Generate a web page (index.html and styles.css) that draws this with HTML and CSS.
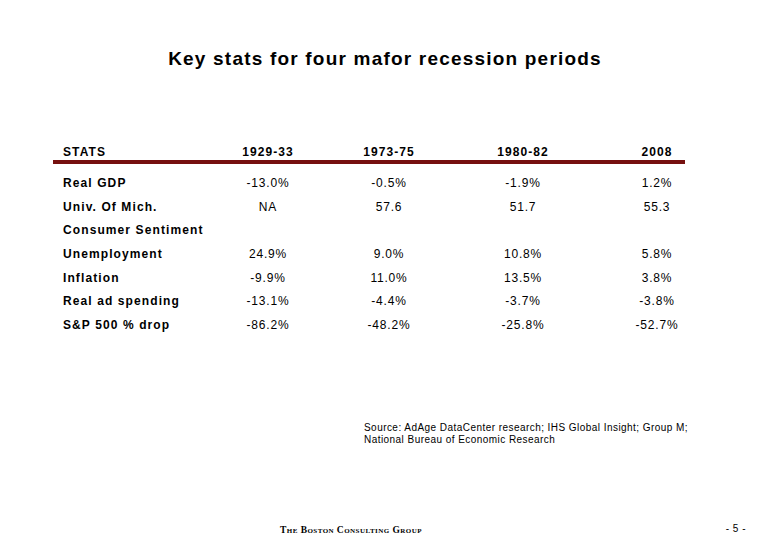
FILE: index.html
```html
<!DOCTYPE html>
<html>
<head>
<meta charset="utf-8">
<link rel="stylesheet" href="styles.css">
</head>
<body>
<div class="page">
  <h1 class="title">Key stats for four mafor recession periods</h1>
  <div class="table">
    <div class="row head">
      <div class="label">STATS</div>
      <div class="cell">1929-33</div>
      <div class="cell">1973-75</div>
      <div class="cell">1980-82</div>
      <div class="cell">2008</div>
    </div>
    <div class="rule"></div>
    <div class="body">
      <div class="row">
        <div class="label">Real GDP</div>
        <div class="cell">-13.0%</div>
        <div class="cell">-0.5%</div>
        <div class="cell">-1.9%</div>
        <div class="cell">1.2%</div>
      </div>
      <div class="row">
        <div class="label">Univ. Of Mich.<br>Consumer Sentiment</div>
        <div class="cell">NA</div>
        <div class="cell">57.6</div>
        <div class="cell">51.7</div>
        <div class="cell">55.3</div>
      </div>
      <div class="row">
        <div class="label">Unemployment</div>
        <div class="cell">24.9%</div>
        <div class="cell">9.0%</div>
        <div class="cell">10.8%</div>
        <div class="cell">5.8%</div>
      </div>
      <div class="row">
        <div class="label">Inflation</div>
        <div class="cell">-9.9%</div>
        <div class="cell">11.0%</div>
        <div class="cell">13.5%</div>
        <div class="cell">3.8%</div>
      </div>
      <div class="row">
        <div class="label">Real ad spending</div>
        <div class="cell">-13.1%</div>
        <div class="cell">-4.4%</div>
        <div class="cell">-3.7%</div>
        <div class="cell">-3.8%</div>
      </div>
      <div class="row">
        <div class="label">S&amp;P 500 % drop</div>
        <div class="cell">-86.2%</div>
        <div class="cell">-48.2%</div>
        <div class="cell">-25.8%</div>
        <div class="cell">-52.7%</div>
      </div>
    </div>
  </div>
  <p class="source">Source: AdAge DataCenter research; IHS Global Insight; Group M;<br>National Bureau of Economic Research</p>
  <div class="footer">
    <span class="brand">The Boston Consulting Group</span>
    <span class="pagenum">- 5 -</span>
  </div>
</div>
</body>
</html>
```

FILE: styles.css
```css
html, body {
  margin: 0;
  padding: 0;
  background: #ffffff;
}

.page {
  width: 780px;
  height: 540px;
  display: flex;
  flex-direction: column;
  font-family: "Liberation Sans", Arial, sans-serif;
  color: #000;
  box-sizing: border-box;
  padding-top: 47px;
}

.title {
  margin: 0;
  font-size: 19px;
  line-height: 24px;
  font-weight: bold;
  letter-spacing: 1.2px;
  text-align: center;
  padding-right: 10px;
}

.table {
  margin-top: 73.5px;
  display: flex;
  flex-direction: column;
}

.row {
  display: grid;
  grid-template-columns: 145px 120px 122px 146px 122px;
  align-items: start;
  padding-left: 63px;
  font-size: 12px;
  line-height: 23.67px;
}

.head {
  font-weight: bold;
  line-height: 15px;
  letter-spacing: 1.1px;
}

.rule {
  margin-left: 53px;
  width: 632px;
  height: 4px;
  background: #76100f;
}

.body {
  padding-top: 8.5px;
}

.label {
  font-weight: bold;
  letter-spacing: 1.1px;
}

.cell {
  text-align: center;
  letter-spacing: 0.8px;
}

.head .cell {
  letter-spacing: 1.1px;
}

.source {
  margin: 84px 0 0 364px;
  font-size: 10px;
  line-height: 12px;
  letter-spacing: 0.45px;
}

.footer {
  margin-top: auto;
  display: flex;
  align-items: center;
  padding: 0 34px 5px 280px;
  height: 16px;
}

.brand {
  font-family: "Liberation Serif", "Times New Roman", serif;
  font-weight: bold;
  font-variant: small-caps;
  font-size: 9.5px;
  letter-spacing: 0.45px;
  margin-top: 6px;
}

.pagenum {
  margin-left: auto;
  font-size: 10px;
  letter-spacing: 0.5px;
  margin-top: 2px;
}
```
